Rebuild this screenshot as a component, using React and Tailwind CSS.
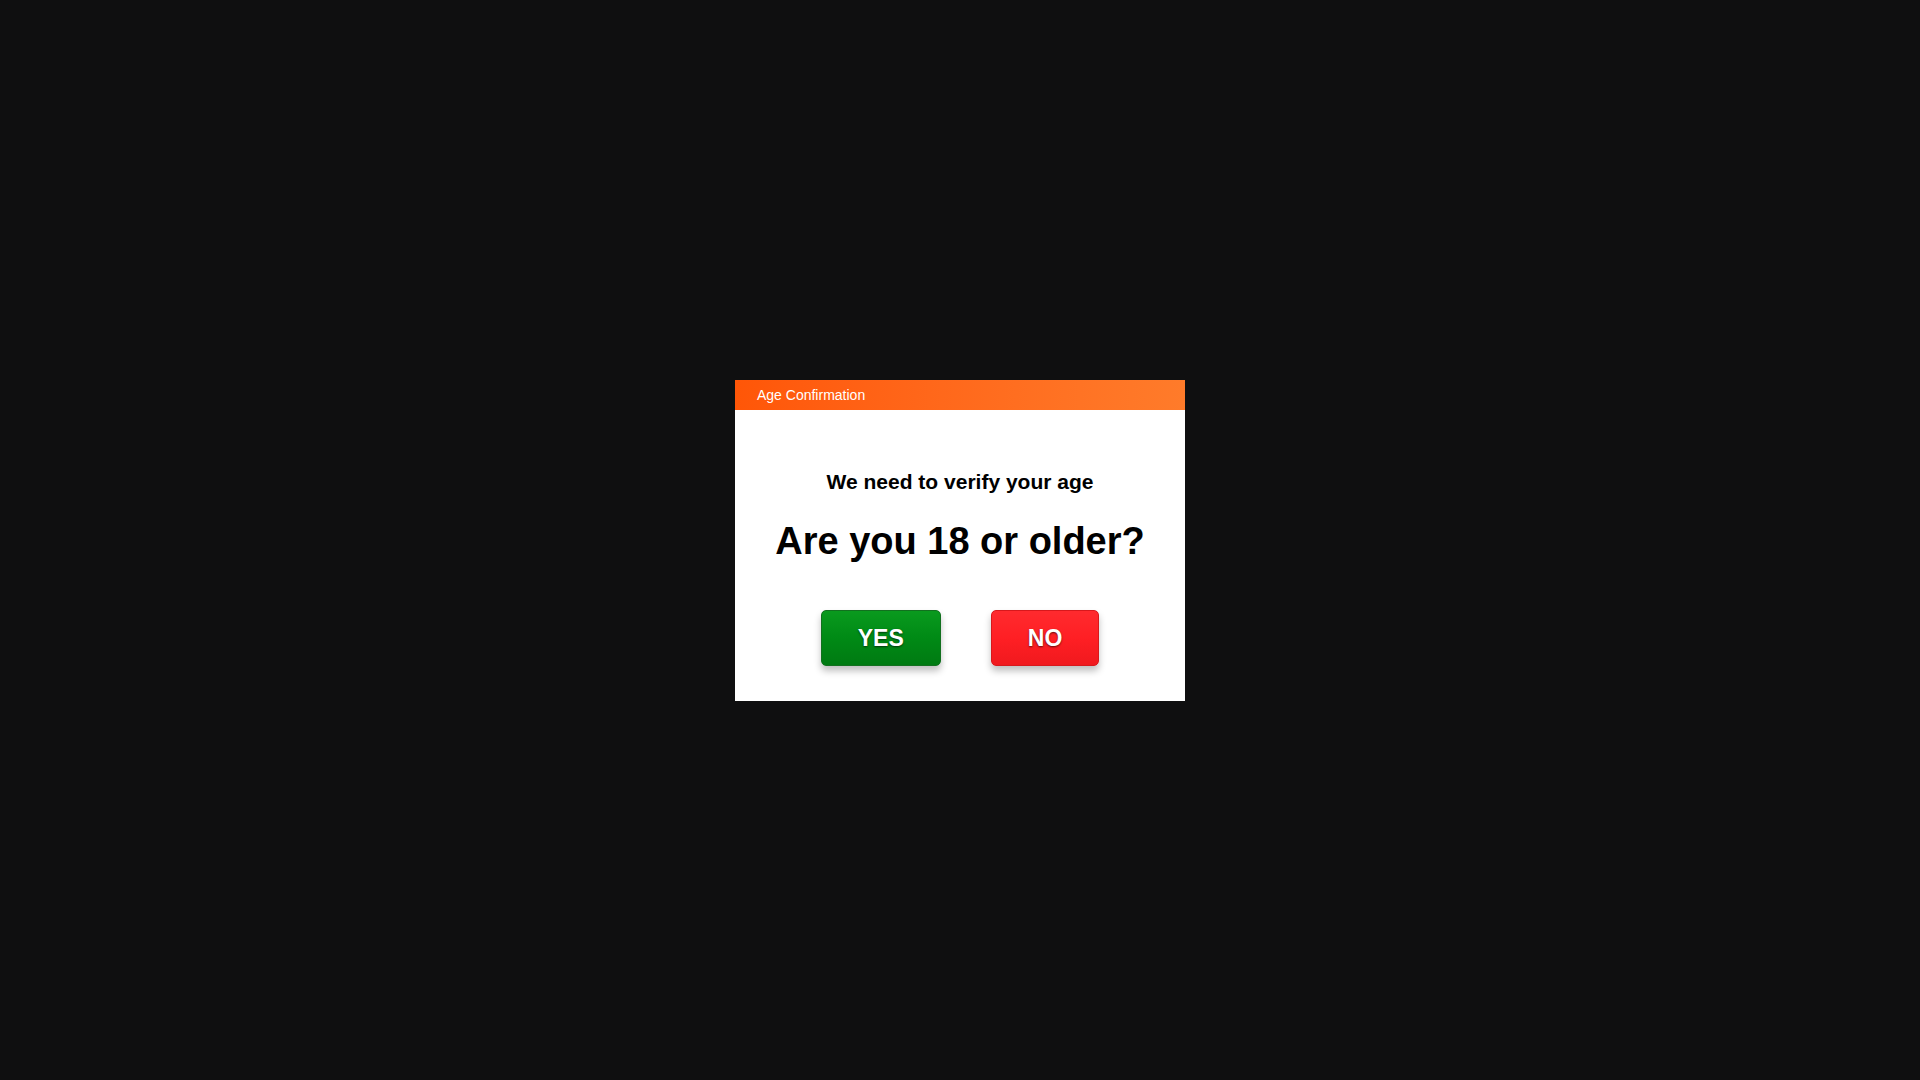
const AgeGate = () => {
    return (
        <div className="w-[450px] bg-white">
            <div className="h-[30px] flex items-center pt-[1px] px-[22px] bg-gradient-to-r from-[#ff5607] to-[#ff7b2a] text-white text-[14px]">
                Age Confirmation
            </div>
            <div className="flex flex-col items-center pt-[60px] pb-[35px] text-black font-bold">
                <h3 className="text-[21px] leading-[24px]">We need to verify your age</h3>
                <h2 className="mt-[25px] text-[38px] leading-[44px]">Are you 18 or older?</h2>
                <div className="mt-[47px] flex gap-[50px]">
                    <button className="h-[56px] pt-[2px] px-[36px] rounded-[5px] text-white text-[23px] font-bold bg-gradient-to-b from-[#0a9a1e] via-[#008a15] to-[#007a12] border border-[#12701f] shadow-[0_5px_7px_rgba(0,0,0,0.25)] [text-shadow:0_1px_2px_rgba(0,0,0,0.6)] cursor-pointer">
                        YES
                    </button>
                    <button className="h-[56px] pt-[2px] px-[36px] rounded-[5px] text-white text-[23px] font-bold bg-gradient-to-b from-[#ff2a2e] via-[#ff1f24] to-[#f0191e] border border-[#d8181c] shadow-[0_5px_7px_rgba(0,0,0,0.25)] [text-shadow:0_1px_2px_rgba(0,0,0,0.6)] cursor-pointer">
                        NO
                    </button>
                </div>
            </div>
        </div>
    );
};

const App = () => {
    return (
        <div className="min-h-screen w-full bg-[#0f0f10] flex items-center justify-center font-['Liberation_Sans',Arial,sans-serif]">
            <AgeGate />
        </div>
    );
};

export default App;
